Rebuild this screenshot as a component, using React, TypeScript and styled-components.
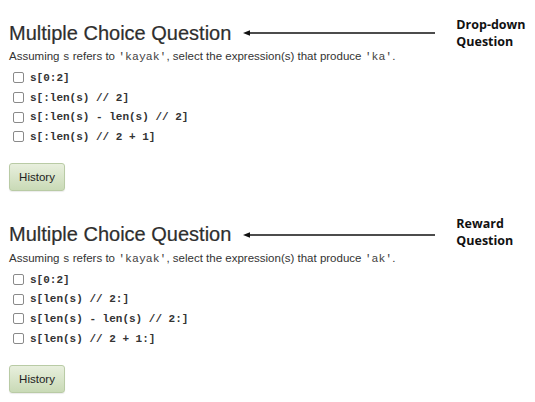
import React from "react";
import styled, { createGlobalStyle } from "styled-components";

const Global = createGlobalStyle`
  html, body { margin: 0; padding: 0; background: #ffffff; }
  body { font-family: "Liberation Sans", Arial, sans-serif; color: #333; }
`;

const Page = styled.div`
  width: 535px;
  height: 402px;
  padding: 18px 0 0 9px;
  box-sizing: border-box;
  display: flex;
  flex-direction: column;
  gap: 29px;
`;

const Section = styled.section`
  display: flex;
  flex-direction: column;
`;

const HeaderRow = styled.div`
  display: flex;
  align-items: center;
  height: 30px;
`;

const Title = styled.h2`
  margin: 0;
  font-family: "Liberation Sans", Arial, sans-serif;
  font-weight: 400;
  font-size: 20px;
  color: #2e2e2e;
  white-space: nowrap;
  -webkit-text-stroke: 0.2px #2e2e2e;
`;

const Arrow = styled.svg`
  margin-left: 12px;
  flex: none;
`;

const Note = styled.div<{ $lift: number }>`
  margin-left: 21px;
  margin-bottom: ${(p) => p.$lift * 2}px;
  font-family: "Open Sans", "Lato", sans-serif;
  font-weight: 700;
  font-size: 12.5px;
  line-height: 17px;
  color: #111;
`;

const Prompt = styled.p`
  margin: 1px 0 4px;
  font-size: 11.5px;
  line-height: 14px;
  color: #333;
`;

const InlineCode = styled.code`
  font-family: "Liberation Mono", "Courier New", monospace;
  font-size: 11.5px;
  color: #444;
`;

const Options = styled.ul`
  list-style: none;
  margin: 0;
  padding: 0 0 0 4px;
  display: flex;
  flex-direction: column;
`;

const Option = styled.li`
  display: flex;
  align-items: center;
  height: 19.7px;
  gap: 6px;
`;

const Box = styled.span`
  width: 9px;
  height: 9px;
  border: 1px solid #8a8a8a;
  border-radius: 2px;
  background: #fff;
  flex: none;
`;

const OptionCode = styled.code`
  font-family: "Liberation Mono", "Courier New", monospace;
  font-weight: 700;
  font-size: 11px;
  color: #333;
`;

const HistoryButton = styled.button`
  margin-top: 16px;
  align-self: flex-start;
  width: 56px;
  height: 28px;
  padding: 0;
  border: 1px solid #b9cba5;
  border-radius: 3px;
  background: linear-gradient(#e8efdd, #c9dab6);
  font-family: "Liberation Sans", Arial, sans-serif;
  font-size: 11.5px;
  color: #222;
  box-shadow: 0 1px 1px rgba(0,0,0,0.08);
`;

type Q = { note: string[]; lift: number; target: string; options: string[] };

const questions: Q[] = [
  {
    note: ["Drop-down", "Question"],
    lift: 0,
    target: "ka",
    options: ["s[0:2]", "s[:len(s) // 2]", "s[:len(s) - len(s) // 2]", "s[:len(s) // 2 + 1]"],
  },
  {
    note: ["Reward", "Question"],
    lift: 3,
    target: "ak",
    options: ["s[0:2]", "s[len(s) // 2:]", "s[len(s) - len(s) // 2:]", "s[len(s) // 2 + 1:]"],
  },
];

export default function App() {
  return (
    <>
      <Global />
      <Page>
        {questions.map((q, i) => (
          <Section key={i}>
            <HeaderRow>
              <Title>Multiple Choice Question</Title>
              <Arrow width="192" height="8" viewBox="0 0 192 8">
                <line x1="3" y1="4" x2="192" y2="4" stroke="#111" strokeWidth="1.6" />
                <path d="M0 4 L7 1.2 L7 6.8 Z" fill="#111" />
              </Arrow>
              <Note $lift={q.lift}>
                {q.note[0]}
                <br />
                {q.note[1]}
              </Note>
            </HeaderRow>
            <Prompt>
              Assuming <InlineCode>s</InlineCode> refers to <InlineCode>'kayak'</InlineCode>, select the
              expression(s) that produce <InlineCode>'{q.target}'</InlineCode>.
            </Prompt>
            <Options>
              {q.options.map((o) => (
                <Option key={o}>
                  <Box />
                  <OptionCode>{o}</OptionCode>
                </Option>
              ))}
            </Options>
            <HistoryButton>History</HistoryButton>
          </Section>
        ))}
      </Page>
    </>
  );
}
